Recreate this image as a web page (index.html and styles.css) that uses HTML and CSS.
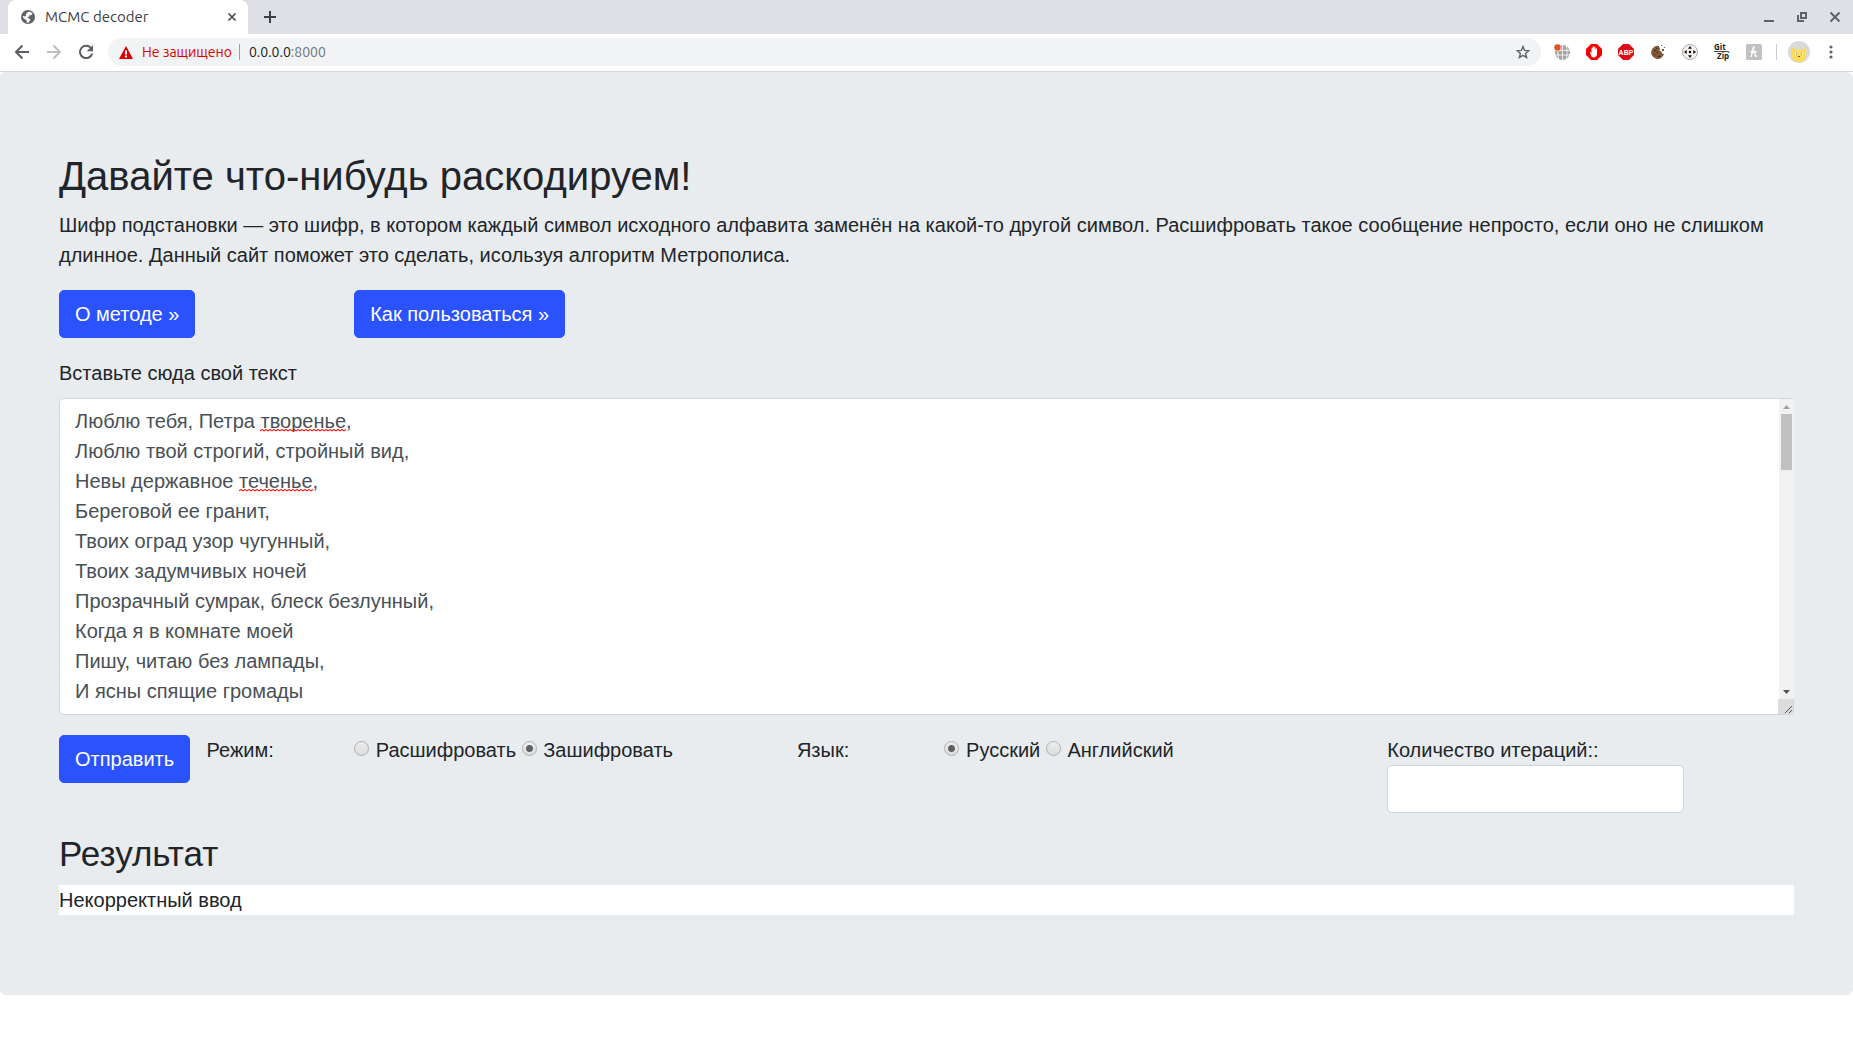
FILE: index.html
```html
<!DOCTYPE html>
<html lang="ru">
<head>
<meta charset="utf-8">
<meta name="viewport" content="width=device-width, initial-scale=1">
<title>MCMC decoder</title>
<link rel="stylesheet" href="styles.css">
</head>
<body>
<header class="browser">
  <div class="tabstrip">
    <div class="tab">
      <svg class="tab-icon" viewBox="0 0 14 14" aria-hidden="true"><circle cx="7" cy="7" r="7" fill="#5f6368"/><path d="M6.500 2.200 9 1.600l2.600 1.800-1 1.600-2 .2-.6 1.600-2 .4 1.800 1 1.600 1.400-1 1.600-1.200 1.600-1.600-.4.200-2-1.600-1L2 7.600 1.800 6l2 .4 1.400-1.200-.4-1z" fill="#fff"/></svg>
      <span class="tab-title">MCMC decoder</span>
      <button class="icon-button" type="button" aria-label="Закрыть вкладку"><svg width="10" height="10" viewBox="0 0 10 10"><path d="M1.500 1.500l7 7m0-7l-7 7" stroke="#45494d" stroke-width="1.700"/></svg></button>
    </div>
    <button class="icon-button new-tab" type="button" aria-label="Новая вкладка"><svg width="12" height="12" viewBox="0 0 12 12"><path d="M6 0v12M0 6h12" stroke="#3c4043" stroke-width="2"/></svg></button>
    <div class="window-controls">
      <button class="icon-button" type="button" aria-label="Свернуть"><svg width="12" height="12" viewBox="0 0 12 12"><path d="M1 10h10" stroke="#5f6368" stroke-width="2"/></svg></button>
      <button class="icon-button" type="button" aria-label="Развернуть"><svg width="12" height="12" viewBox="0 0 12 12"><path d="M5 2h5v5H5zM2 4v6h6" fill="none" stroke="#5f6368" stroke-width="2"/></svg></button>
      <button class="icon-button" type="button" aria-label="Закрыть"><svg width="12" height="12" viewBox="0 0 12 12"><path d="M1.500 1.500l9 9m0-9l-9 9" stroke="#5f6368" stroke-width="2"/></svg></button>
    </div>
  </div>
  <div class="toolbar">
    <div class="nav">
      <button class="icon-button" type="button" aria-label="Назад"><svg width="16" height="16" viewBox="0 0 16 16"><path d="M15 8H2.500M8.500 1.500L2 8l6.500 6.500" fill="none" stroke="#5a5e63" stroke-width="2"/></svg></button>
      <button class="icon-button" type="button" aria-label="Вперёд"><svg width="16" height="16" viewBox="0 0 16 16"><path d="M1 8h12.500M7.500 1.500L14 8l-6.500 6.500" fill="none" stroke="#bdc0c3" stroke-width="2"/></svg></button>
      <button class="icon-button" type="button" aria-label="Обновить"><svg width="16" height="16" viewBox="0 0 16 16"><path d="M12.700 3.600A6.200 6.200 0 1 0 14.200 9.500" fill="none" stroke="#5a5e63" stroke-width="2"/><path d="M15 1v6.300H8.700z" fill="#5a5e63"/></svg></button>
    </div>
    <div class="omnibox">
      <svg width="14" height="13" viewBox="0 0 14 13" aria-hidden="true"><path d="M7 0l7 13H0z" fill="#d90000"/><path d="M6 4.500h2v4H6zM6 9.500h2v2H6z" fill="#fff"/></svg>
      <span class="insecure">Не защищено</span>
      <span class="address">0.0.0.0<span class="port">:8000</span></span>
      <button class="icon-button star" type="button" aria-label="Добавить в закладки"><svg width="14" height="14" viewBox="0 0 14 14"><path d="M7 1.500l1.600 3.900 4.200.3-3.200 2.700 1 4.100L7 10.300l-3.600 2.200 1-4.100L1.200 5.700l4.200-.3z" fill="none" stroke="#5f6368" stroke-width="1.400"/></svg></button>
    </div>
    <div class="extensions">
      <svg width="16" height="16" viewBox="0 0 16 16"><circle cx="8.500" cy="8.500" r="7.500" fill="#a3a3a3"/><path d="M1 6.500h15M1 11h15M8.500 1v15M5 1c-1.500 5-1.500 10 0 15M12 1c1.500 5 1.500 10 0 15" fill="none" stroke="#fff" stroke-width=".8"/><circle cx="3.500" cy="3.500" r="3.800" fill="#fff"/><circle cx="3.500" cy="3.500" r="3.200" fill="#e65020"/></svg>
      <svg width="16" height="16" viewBox="0 0 16 16"><path d="M5 0h6l5 5v6l-5 5H5l-5-5V5z" fill="#f40000"/><path d="M4 8.200c1-.5 1.300.7 1.500 1V4.200c0-1 1.200-1 1.200 0V7l.1-4c0-1 1.300-1 1.300 0v4l.2-3.500c0-1 1.200-1 1.200 0V7.500l.3-2.600c.1-.9 1.200-.8 1.200.1v5c0 4-5 4.400-6 1.500z" fill="#fff"/></svg>
      <svg width="16" height="16" viewBox="0 0 16 16"><path d="M5 0h6l5 5v6l-5 5H5l-5-5V5z" fill="#df0b14"/><text class="abp" x="8" y="11" text-anchor="middle">ABP</text></svg>
      <svg width="16" height="16" viewBox="0 0 16 16"><path d="M9 2a6.500 6.500 0 1 0 5 8l-2-.5-.5-2-2-.5.500-2z" fill="#805535"/><path d="M4 6h2v1H4zM7 8h1v1H7zM4 10h1v1H4zM8 12h2v1H8zM6 4h1v1H6z" fill="#3f2817"/><path d="M11 1h1v1h-1zM14 3h1v1h-1zM12 5h2v2h-2z" fill="#805535"/></svg>
      <svg width="16" height="16" viewBox="0 0 16 16"><circle cx="8" cy="8" r="7.500" fill="#f6f0ef" stroke="#aaa"/><circle cx="8" cy="8" r="1.200"/><path d="M8 2l2 2.700H6zM8 14l2-2.700H6zM2 8l2.700-2v4zM14 8l-2.700-2v4z" fill="#111"/></svg>
      <svg class="gitzip-icon" width="16" height="16" viewBox="0 0 16 16"><text class="gitzip" x="0" y="6">Git</text><path d="M0 7.500h13q3 0 2 1.500" fill="none" stroke="#444"/><text class="gitzip" x="3" y="15">Zip</text></svg>
      <svg width="16" height="16" viewBox="0 0 16 16"><rect width="16" height="16" rx="1.500" fill="#c1c1c1"/><path d="M5 13c1-3 1.500-8 2.500-10 1-1 1 2-2 4.500h5M6.500 9c2-1.500 3-1 2.500 1-.5 2 .5 3 2 1.500" fill="none" stroke="#fff" stroke-width="1.300"/></svg>
      <span class="divider"></span>
      <svg class="avatar" width="22" height="22" viewBox="0 0 22 22"><circle cx="11" cy="11" r="11" fill="#d9d9d9"/><path d="M4.500 6l3.500 3h6l3.500-3 1 6c0 6-3 9-7.500 9s-8-3-7.500-9z" fill="#ffdc58"/><path d="M7 12h2v2H7zM13 12h2v2h-2z" fill="#fff"/><path d="M8 12.500h1v1H8zM13 12.500h1v1h-1zM10 15h2v1h-2z" fill="#7b5c18"/></svg>
      <button class="icon-button" type="button" aria-label="Меню"><svg width="4" height="14" viewBox="0 0 4 14"><circle cx="2" cy="2" r="1.600"/><circle cx="2" cy="7" r="1.600"/><circle cx="2" cy="12" r="1.600"/></svg></button>
    </div>
  </div>
</header>

<main class="jumbotron">
  <h1 class="title">Давайте что-нибудь раскодируем!</h1>
  <p class="lead">Шифр подстановки — это шифр, в котором каждый символ исходного алфавита заменён на какой-то другой символ. Расшифровать такое сообщение непросто, если оно не слишком длинное. Данный сайт поможет это сделать, исользуя алгоритм Метрополиса.</p>
  <nav class="row links">
    <div class="col-2"><a class="btn" href="#method">О методе »</a></div>
    <div class="col-2"><a class="btn" href="#usage">Как пользоваться »</a></div>
  </nav>
  <form>
    <label class="text-label" for="text">Вставьте сюда свой текст</label>
    <div class="editor">
      <textarea class="control" id="text" name="text" rows="10" spellcheck="false">Люблю тебя, Петра творенье,
Люблю твой строгий, стройный вид,
Невы державное теченье,
Береговой ее гранит,
Твоих оград узор чугунный,
Твоих задумчивых ночей
Прозрачный сумрак, блеск безлунный,
Когда я в комнате моей
Пишу, читаю без лампады,
И ясны спящие громады</textarea>
      <svg class="squiggle squiggle-1" aria-hidden="true"><defs><pattern id="wave" width="4" height="3" patternUnits="userSpaceOnUse"><path d="M-1 3l3-3 3 3" transform="translate(0 .5) scale(1 .7)" fill="none" stroke="#f00" stroke-width="1.200"/></pattern></defs><rect width="100%" height="3" fill="url(#wave)"/></svg>
      <svg class="squiggle squiggle-2" aria-hidden="true"><rect width="100%" height="3" fill="url(#wave)"/></svg>
      <div class="scrollbar" aria-hidden="true">
        <svg class="arrow" width="15" height="15" viewBox="0 0 15 15"><path d="M4 10l3.500-4L11 10z" fill="#a3a3a3"/></svg>
        <div class="track"><div class="thumb"></div></div>
        <svg class="arrow" width="15" height="15" viewBox="0 0 15 15"><path d="M4 6l3.500 4L11 6z" fill="#505050"/></svg>
      </div>
    </div>
    <div class="row options">
      <div class="col-1"><button class="btn" type="submit">Отправить</button></div>
      <div class="col-1" id="mode-label">Режим:</div>
      <div class="col-3" role="radiogroup" aria-labelledby="mode-label">
        <input type="radio" name="mode" id="decode"> <label for="decode">Расшифровать</label>
        <input type="radio" name="mode" id="encode" checked> <label for="encode">Зашифровать</label>
      </div>
      <div class="col-1" id="lang-label">Язык:</div>
      <div class="col-3" role="radiogroup" aria-labelledby="lang-label">
        <input type="radio" name="lang" id="ru" checked> <label for="ru">Русский</label>
        <input type="radio" name="lang" id="en"> <label for="en">Английский</label>
      </div>
      <div class="iterations">
        <label for="iterations">Количество итераций::</label>
        <input class="control" type="text" id="iterations" name="iterations">
      </div>
    </div>
  </form>
  <h2 class="subtitle">Результат</h2>
  <div class="result">Некорректный ввод</div>
</main>
</body>
</html>
```
FILE: styles.css
```css
* { box-sizing: border-box; }

body {
  margin: 0;
  background: #fff;
  color: #212529;
  font: 20px/30px "Liberation Sans", Arial, sans-serif;
}

/* Browser frame */
.browser {
  font: 14px/20px Ubuntu, "Noto Sans", sans-serif;
  color: #3c4043;
  border-bottom: 1px solid #d5d7da;
}

.icon-button {
  display: flex;
  padding: 0;
  border: 0;
  background: none;
}

.tabstrip {
  display: flex;
  align-items: center;
  height: 34px;
  padding: 0 12px 0 8px;
  background: #dee0e6;
}

.tab {
  display: flex;
  align-items: center;
  gap: 10px;
  width: 240px;
  height: 34px;
  padding: 0 11px 0 13px;
  background: #fff;
  border-radius: 8px 8px 0 0;
}

.tab-icon { width: 14px; height: 14px; }
.tab-title { flex: 1; font-size: 15px; }
.new-tab { margin-left: 16px; }

.window-controls {
  display: flex;
  gap: 21px;
  margin-left: auto;
}

.toolbar {
  display: flex;
  align-items: center;
  height: 37px;
  padding: 0 20px 1px 14px;
}

.nav { display: flex; gap: 16px; }

.omnibox {
  display: flex;
  flex: 1;
  align-items: center;
  height: 28px;
  margin-left: 14px;
  padding: 0 11px;
  border-radius: 14px;
  background: #f1f3f4;
}

.insecure {
  margin-left: 9px;
  padding-right: 7px;
  border-right: 1px solid #9aa0a6;
  color: #d90000;
  line-height: 16px;
}

.address { margin-left: 9px; color: #202124; }
.port { color: #70757a; }
.star { margin-left: auto; }

.extensions {
  display: flex;
  align-items: center;
  gap: 16px;
  margin-left: 13px;
}

.divider { width: 1px; height: 16px; margin: 0 -2px; background: #ccc; }
.avatar { margin: 0 -3px; }
.extensions .icon-button { margin-left: 6px; fill: #5f6368; }
.abp { font: bold 7px "Liberation Sans", sans-serif; fill: #fff; }
.gitzip-icon { overflow: visible; }
.gitzip { font: bold 8px "Open Sans", sans-serif; fill: #222; }

/* Page */
.jumbotron {
  padding: 80px 59px;
  border-radius: 6px;
  background: #e8ecef;
}

.title, .subtitle { margin: 0 0 10px; font-weight: 400; }
.title { font-size: 40px; line-height: 48px; }
.subtitle { font-size: 35px; line-height: 42px; }
.lead { margin: 0 0 20px; }

.row {
  display: flex;
  margin: 0 -18px 20px;
}

.row > * { flex: none; padding-left: 18px; }
.col-1 { width: calc(100% / 12); }
.col-2 { width: calc(100% / 6); }
.col-3 { width: 25%; }

.btn {
  display: inline-block;
  height: 48px;
  padding: 8px 15px;
  border: 1px solid #2b52ff;
  border-radius: 5px;
  background: #2b52ff;
  color: #fff;
  font: inherit;
  text-decoration: none;
  white-space: nowrap;
  vertical-align: top;
}

.text-label { display: block; margin-bottom: 10px; }

.control {
  display: block;
  width: 100%;
  height: 48px;
  padding: 7px 15px;
  border: 1px solid #ced4da;
  border-radius: 5px;
  background: #fff;
  color: #495057;
  font: inherit;
}

.editor { position: relative; margin-bottom: 20px; }

textarea.control {
  height: 317px;
  overflow: hidden;
  resize: vertical;
}

textarea::-webkit-resizer {
  background: #dcdcdc url("data:image/svg+xml,%3Csvg xmlns='http://www.w3.org/2000/svg' viewBox='0 0 15 15'%3E%3Cpath d='M7 14l7-7M11 14l3-3' stroke='%23505050'/%3E%3C/svg%3E");
}

/* Scrollbar over the right edge of the text box, above the resize corner */
.scrollbar {
  position: absolute;
  top: 1px;
  right: 0;
  bottom: 16px;
  display: flex;
  flex-direction: column;
  width: 15px;
  border-radius: 0 4px 0 0;
  background: #f1f1f1;
}

.arrow { flex: none; }
.track { flex: 1; padding: 0 2px; }
.thumb { height: 56px; background: #c1c1c1; }

/* Spell-check marks over the text */
.squiggle { position: absolute; height: 3px; pointer-events: none; }
.squiggle-1 { left: 201px; top: 31px; width: 86px; }
.squiggle-2 { left: 180px; top: 91px; width: 74px; }

input[type="radio"] {
  appearance: none;
  width: 15px;
  height: 15px;
  margin: 0 1px 0 0;
  border: 1px solid #b0b0b0;
  border-radius: 50%;
  background: linear-gradient(#ededed, #dcdcdc);
  vertical-align: 1px;
}

input[type="radio"]:checked {
  background: radial-gradient(circle, #606060 3px, transparent 4px), linear-gradient(#ededed, #dcdcdc);
}

.iterations { width: 315px; }
.iterations label { display: block; }
.result { background: #fff; }
```
